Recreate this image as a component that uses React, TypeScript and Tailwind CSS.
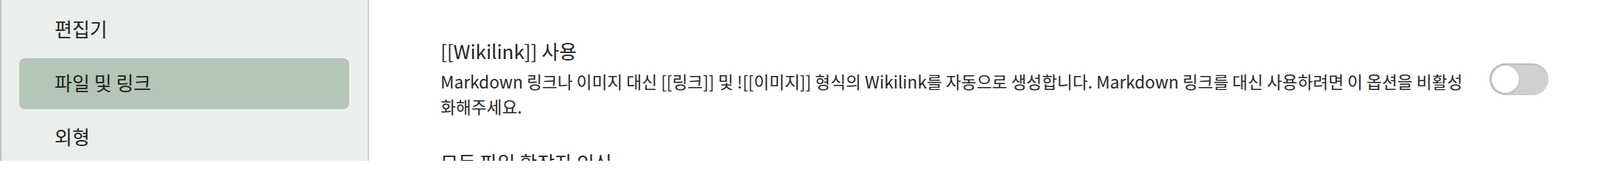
import React from 'react';

const navItems = ['편집기', '파일 및 링크', '외형'];

function Toggle({ on = false }: { on?: boolean }) {
  return (
    <div
      className={`relative w-[80px] h-[43px] shrink-0 rounded-full shadow-[inset_1px_1px_3px_rgba(0,0,0,0.18)] ${
        on ? 'bg-[#7fa28a]' : 'bg-[#d0d0d0]'
      }`}
    >
      <div
        className={`absolute top-[3px] w-[37px] h-[37px] rounded-full bg-white shadow-[0_1px_2px_rgba(0,0,0,0.2)] ${
          on ? 'right-[3px]' : 'left-[3px]'
        }`}
      />
    </div>
  );
}

export default function App() {
  return (
    <div
      className="flex w-[2172px] h-[218px] overflow-hidden bg-white text-[#222]"
      style={{ fontFamily: '"Noto Sans CJK KR", "Noto Sans", sans-serif' }}
    >
      {/* ── Sidebar ── */}
      <div className="w-[501px] shrink-0 bg-[#eaefeb] border-l-2 border-r-2 border-l-[#c2c2c2] border-r-[#cfd2cf] pt-[6px] pl-[24px] pr-[25px] flex flex-col gap-[4px]">
        {navItems.map((label) => (
          <div
            key={label}
            className={`h-[69px] shrink-0 flex items-center pl-[48px] pb-[4px] rounded-[8px] text-[26px] ${
              label === '파일 및 링크' ? 'bg-[#b4c6b8]' : ''
            }`}
          >
            {label}
          </div>
        ))}
      </div>

      {/* ── Settings ── */}
      <div className="flex-1 pl-[97px] pr-[70px] pt-[52px]">
        <div className="flex items-center pb-[41px]">
          <div className="w-[1390px] shrink-0">
            <div className="text-[26px] leading-[34px] text-[#222]">[[Wikilink]] 사용</div>
            <div className="mt-[8px] text-[22.7px] leading-[34px] text-[#262626]">
              Markdown 링크나 이미지 대신 [[링크]] 및 ![[이미지]] 형식의 Wikilink를 자동으로 생성합니다. Markdown 링크를 대신 사용하려면 이 옵션을 비활성화해주세요.
            </div>
          </div>
          <div className="flex-1 flex justify-end">
            <Toggle />
          </div>
        </div>
        <div className="flex items-center">
          <div className="text-[26px] leading-[34px] text-[#222]">모든 파일 확장자 인식</div>
        </div>
      </div>
    </div>
  );
}
